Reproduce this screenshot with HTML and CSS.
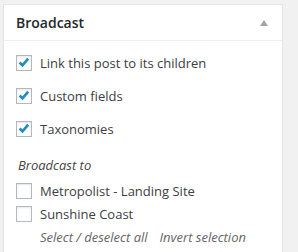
FILE: index.html
```html
<!DOCTYPE html>
<html lang="en">
<head>
    <meta charset="UTF-8">
    <meta name="viewport" content="width=device-width, initial-scale=1.0">
    <title>Broadcast</title>
    <link rel="stylesheet" href="styles.css">
</head>
<body>
    <div class="postbox">
        <div class="postbox-header">
            <h2>Broadcast</h2>
            <span class="toggle-arrow"></span>
        </div>
        <div class="inside">
            <div class="options">
                <label class="check-row">
                    <span class="box checked"><svg viewBox="0 0 16 16"><path d="M3 7.4 L6.3 10.7 L12.8 3"/></svg></span>
                    Link this post to its children
                </label>
                <label class="check-row">
                    <span class="box checked"><svg viewBox="0 0 16 16"><path d="M3 7.4 L6.3 10.7 L12.8 3"/></svg></span>
                    Custom fields
                </label>
                <label class="check-row">
                    <span class="box checked"><svg viewBox="0 0 16 16"><path d="M3 7.4 L6.3 10.7 L12.8 3"/></svg></span>
                    Taxonomies
                </label>
            </div>
            <p class="broadcast-to">Broadcast to</p>
            <div class="blogs">
                <label class="check-row">
                    <span class="box"></span>
                    Metropolist - Landing Site
                </label>
                <label class="check-row">
                    <span class="box"></span>
                    Sunshine Coast
                </label>
            </div>
            <div class="selection-links">
                <a href="#">Select / deselect all</a>
                <a href="#">Invert selection</a>
            </div>
        </div>
    </div>
</body>
</html>
```

FILE: styles.css
```css
* {
    margin: 0;
    padding: 0;
    box-sizing: border-box;
    font-family: 'Open Sans', sans-serif;
}

body {
    background: #f1f1f1;
    height: 100vh;
    overflow: hidden;
    padding: 4px 0 0 3px;
}

.postbox {
    width: 280px;
    height: 300px;
    background: #fff;
    border: 1px solid #e5e5e5;
    box-shadow: 0 1px 1px rgba(0, 0, 0, 0.04);
}

.postbox-header {
    height: 36px;
    border-bottom: 1px solid #eee;
    display: flex;
    align-items: center;
    justify-content: space-between;
    padding: 0 14px 0 12px;
}

h2 {
    font-size: 14px;
    font-weight: 600;
    color: #23282d;
    line-height: 1;
}

.toggle-arrow {
    width: 0;
    height: 0;
    border-left: 4px solid transparent;
    border-right: 4px solid transparent;
    border-bottom: 6px solid #a0a5aa;
    margin-top: 1px;
}

.inside {
    padding: 14px 12px 0 12px;
}

.options {
    display: flex;
    flex-direction: column;
    gap: 17px;
}

.check-row {
    display: flex;
    align-items: center;
    gap: 8px;
    height: 16px;
    font-size: 13px;
    color: #3c4045;
}

.box {
    width: 16px;
    height: 16px;
    border: 1px solid #b4b9be;
    background: #fff;
    box-shadow: inset 0 1px 2px rgba(0, 0, 0, 0.1);
    display: flex;
    align-items: center;
    justify-content: center;
    flex-shrink: 0;
}

.box svg {
    width: 14px;
    height: 14px;
}

.box svg path {
    fill: none;
    stroke: #1e8cbe;
    stroke-width: 3;
    stroke-linecap: butt;
    stroke-linejoin: miter;
}

.broadcast-to {
    font-size: 13px;
    font-style: italic;
    color: #444;
    margin: 19px 0 0 2px;
    line-height: 18px;
}

.blogs {
    display: flex;
    flex-direction: column;
    gap: 7px;
    margin-top: 9px;
}

.selection-links {
    display: flex;
    gap: 12px;
    margin: 6px 0 0 24px;
    font-size: 13px;
    font-style: italic;
    line-height: 18px;
}

.selection-links a {
    color: #666;
    text-decoration: none;
}
```
